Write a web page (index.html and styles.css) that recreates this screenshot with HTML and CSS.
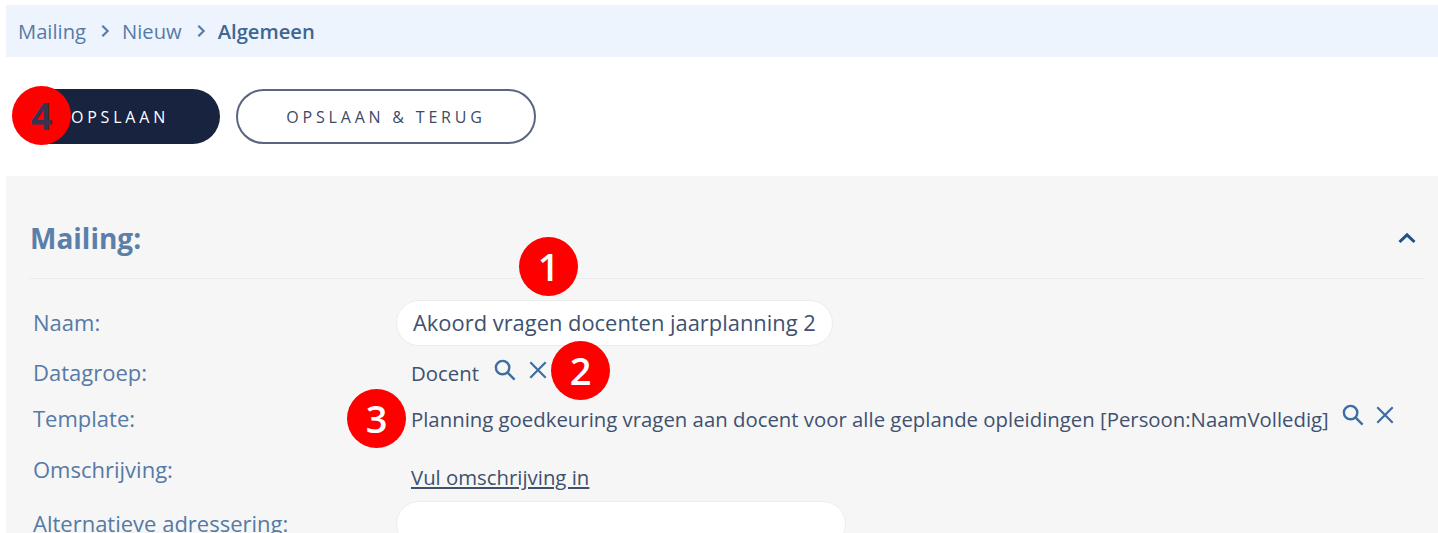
FILE: index.html
```html
<!DOCTYPE html>
<html lang="nl">
<head>
<meta charset="utf-8">
<title>Mailing</title>
<link rel="stylesheet" href="styles.css">
</head>
<body>
<nav class="crumbs">
  <span>Mailing</span>
  <svg class="sep" viewBox="0 0 8 12"><path d="M2 2l4 4-4 4"/></svg>
  <span>Nieuw</span>
  <svg class="sep" viewBox="0 0 8 12"><path d="M2 2l4 4-4 4"/></svg>
  <strong>Algemeen</strong>
</nav>
<div class="actions">
  <button class="btn primary">OPSLAAN</button>
  <button class="btn outline">OPSLAAN &amp; TERUG</button>
</div>
<section class="panel">
  <header class="panel-head">
    <h2>Mailing:</h2>
    <svg class="chev" viewBox="0 0 20 12"><path d="M2.5 10L10 2.8 17.5 10"/></svg>
  </header>
  <div class="row r-naam">
    <label>Naam:</label>
    <div class="input w1">Akoord vragen docenten jaarplanning 2</div>
  </div>
  <div class="row r-data">
    <label>Datagroep:</label>
    <div class="val"><span>Docent</span>
      <svg class="ico search" viewBox="0 0 20 20"><circle cx="8" cy="8" r="5.6"/><path d="M12.2 12.2L18 18"/></svg>
      <svg class="ico close" viewBox="0 0 20 20"><path d="M3 3l14 14M17 3L3 17"/></svg>
    </div>
  </div>
  <div class="row r-tpl">
    <label>Template:</label>
    <div class="val"><span>Planning goedkeuring vragen aan docent voor alle geplande opleidingen [Persoon:NaamVolledig]</span>
      <svg class="ico search" viewBox="0 0 20 20"><circle cx="8" cy="8" r="5.6"/><path d="M12.2 12.2L18 18"/></svg>
      <svg class="ico close" viewBox="0 0 20 20"><path d="M3 3l14 14M17 3L3 17"/></svg>
    </div>
  </div>
  <div class="row r-oms">
    <label>Omschrijving:</label>
    <div class="val"><a href="#">Vul omschrijving in</a></div>
  </div>
  <div class="row r-alt">
    <label>Alternatieve adressering:</label>
    <div class="input w2"></div>
  </div>
</section>
<span class="badge b1">1</span>
<span class="badge b2">2</span>
<span class="badge b3">3</span>
<span class="badge b4">4</span>
</body>
</html>
```
FILE: styles.css
```css
html, body { height: 100%; }
body {
  margin: 0;
  padding: 5px 0 0 6px;
  box-sizing: border-box;
  height: 533px;
  overflow: hidden;
  background: #fff;
  font-family: "Open Sans", sans-serif;
  color: #40516f;
  position: relative;
}
.crumbs {
  height: 52px;
  background: #edf4fd;
  display: flex;
  align-items: center;
  padding-left: 12px;
  font-size: 20.2px;
  color: #567ba6;
}
.crumbs strong { font-weight: 600; color: #3f6591; }
.sep { width: 12px; height: 16px; margin: 0 11px 0 13px; fill: none; stroke: #567ba6; stroke-width: 1.6; }
.actions {
  display: flex;
  gap: 16px;
  margin-top: 32px;
  padding-left: 10px;
}
.btn {
  height: 55px;
  border-radius: 28px;
  font-family: "Open Sans", sans-serif;
  font-size: 16px;
  letter-spacing: 3.8px;
  box-sizing: border-box;
  padding: 0;
}
.primary {
  width: 204px;
  background: #17233f;
  border: 0;
  color: #fff;
  padding-left: 4px;
}
.outline {
  width: 300px;
  background: #fff;
  border: 2.5px solid #5a6580;
  color: #3c4a67;
}
.panel {
  margin-top: 32px;
  background: #f6f6f6;
  height: 357px;
  padding: 0 13px 0 23px;
  overflow: hidden;
}
.panel-head {
  height: 103px;
  box-sizing: border-box;
  display: flex;
  justify-content: space-between;
  align-items: center;
  border-bottom: 1px solid #ececec;
  padding: 22px 8px 0 1px;
}
.panel-head h2 {
  margin: 0;
  font-size: 28px;
  font-weight: 700;
  color: #5b7fa9;
}
.chev { width: 20px; height: 12px; fill: none; stroke: #1f5288; stroke-width: 3; }
.row { display: flex; font-size: 22px; padding-left: 4px; }
.row label { width: 363px; flex: none; color: #557aa5; line-height: 27px; margin-top: -1px; }
.r-naam { margin-top: 21px; align-items: center; height: 46px; }
.r-naam label { margin-top: -2px; }
.input {
  background: #fff;
  border: 1px solid #ececec;
  border-radius: 24px;
  box-sizing: border-box;
  height: 46px;
  padding: 0 16px;
  line-height: 44px;
  white-space: nowrap;
}
.w1 { width: 437px; font-size: 21.9px; }
.w2 { width: 450px; }
.val { margin-left: 15px; display: flex; white-space: nowrap; line-height: 27px; font-size: 20.35px; }
.r-data { margin-top: 14px; height: 32px; }
.r-tpl { margin-top: 14px; height: 51px; }
.r-oms { height: 44px; }
.r-oms .val { margin-top: 7px; }
.r-oms a { color: #40516f; }
.r-alt { align-items: flex-start; }
.r-alt label { margin-top: 9px; }
.ico { width: 24px; height: 24px; fill: none; stroke: #3c6ea3; stroke-width: 2; flex: none; }
.search { margin: -2px 0 0 14px; }
.close { width: 22px; height: 22px; margin: -1px 0 0 10px; }
.r-tpl .search { margin: -3px 0 0 12px; }
.r-tpl .close { margin: -2px 0 0 9px; }
.badge {
  position: absolute;
  width: 59px;
  height: 59px;
  border-radius: 50%;
  background: #fe0000;
  color: #fff;
  font-size: 38px;
  font-weight: 600;
  line-height: 59px;
  text-align: center;
}
.b1 { left: 519px; top: 237px; }
.b2 { left: 551px; top: 341px; }
.b3 { left: 347px; top: 389px; }
.b4 { left: 12px; top: 86px; color: #3a3350; font-weight: 700; }
```
